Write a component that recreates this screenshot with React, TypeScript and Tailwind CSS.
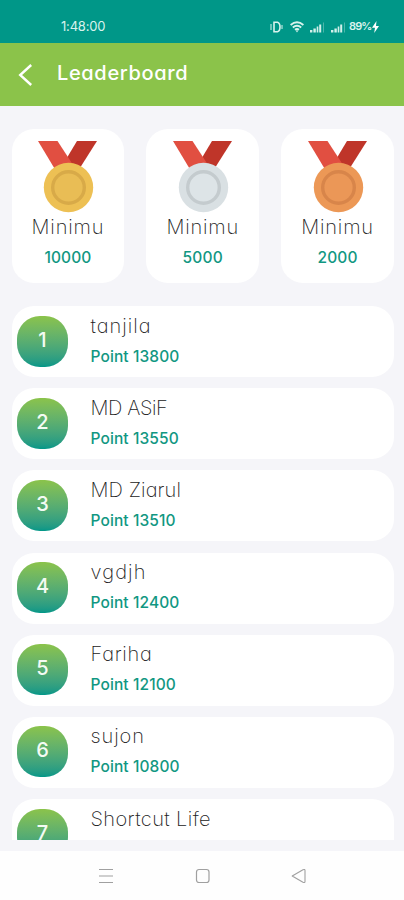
import React from 'react';

type MedalTone = { outer: string; ring: string; inner: string };

const medals: { tone: MedalTone; value: string; track: string }[] = [
  { tone: { outer: '#edc054', ring: '#d8aa48', inner: '#e9bd55' }, value: '10000', track: 'tracking-[0.1px]' },
  { tone: { outer: '#d9e0e3', ring: '#c4cbce', inner: '#dde4e7' }, value: '5000', track: 'tracking-[0.2px]' },
  { tone: { outer: '#ec9856', ring: '#d8854a', inner: '#eb9757' }, value: '2000', track: 'tracking-[0.2px]' },
];

const players = [
  { name: 'tanjila', points: '13800', track: 'tracking-[1px]' },
  { name: 'MD ASiF', points: '13550', track: 'tracking-[-0.4px]' },
  { name: 'MD Ziarul', points: '13510', track: 'tracking-[0.1px]' },
  { name: 'vgdjh', points: '12400', track: 'tracking-[1.1px]' },
  { name: 'Fariha', points: '12100', track: 'tracking-[0.7px]' },
  { name: 'sujon', points: '10800', track: 'tracking-[0.9px]' },
  { name: 'Shortcut Life', points: null, track: 'tracking-[0.4px]' },
];

function Medal({ tone }: { tone: MedalTone }) {
  return (
    <svg width="64" height="72" viewBox="0 0 64 72" className="block">
      <path d="M41 0H61L42 30H23Z" fill="#bf3529" />
      <path d="M2 0H21.5L41 30H20Z" fill="#e14f41" />
      <circle cx="32.5" cy="46.5" r="24.7" fill={tone.outer} />
      <circle cx="32.5" cy="46.5" r="15.8" fill={tone.inner} stroke={tone.ring} strokeWidth="3.4" />
    </svg>
  );
}

function Signal() {
  return (
    <svg width="15" height="12" viewBox="0 0 15 12" fill="#d3f0ea">
      <rect x="0" y="9" width="2.4" height="2.5" />
      <rect x="3.4" y="7.5" width="2.4" height="4" />
      <rect x="6.7" y="5.5" width="1.6" height="6" />
      <rect x="9.2" y="3.5" width="2" height="8" />
      <rect x="13" y="1.5" width="1" height="10" opacity="0.35" />
    </svg>
  );
}

function StatusBar() {
  return (
    <div className="flex h-[43px] shrink-0 items-start bg-[#009788] pt-[19px] pr-[25px] pl-[61px] text-[#d9f3ed]">
      <span className="text-[13px] leading-[15px] tracking-[-0.2px]">1:48:00</span>
      <div className="ml-auto flex h-[15px] items-center">
        <svg width="13" height="12" viewBox="0 0 13 12" fill="none" stroke="currentColor" className="mr-[7px]">
          <path d="M4 1.2H7.5Q10 2 10 6T7.5 10.8H4Z" strokeWidth="1.6" />
          <path d="M1 3V9M12 4V8" />
        </svg>
        <svg width="14" height="12" viewBox="0 0 14 12" fill="none" stroke="currentColor" strokeWidth="1.9" className="mr-[6px]">
          <path d="M.6 4Q7-1.3 13.4 4M2.8 6.5Q7 3 11.2 6.5M5 8.8Q7 7.2 9 8.8" />
          <path d="M5.7 9.4H8.3L7 11.4Z" fill="currentColor" stroke="none" />
        </svg>
        <Signal />
        <span className="w-[6px]" />
        <Signal />
        <span className="ml-[3px] w-[22px] text-[11px] leading-[13px] font-semibold tracking-[-0.9px] whitespace-nowrap">89%</span>
        <svg width="7" height="12" viewBox="0 0 7 12" fill="white" className="ml-[1px]">
          <path d="M4.5 0L0 6.8H3L2.2 12L7 5H4Z" />
        </svg>
      </div>
    </div>
  );
}

export default function App() {
  return (
    <div className="flex h-[900px] w-[404px] flex-col overflow-hidden bg-[#f5f5f9] font-['Inter','Liberation_Sans',sans-serif] [font-feature-settings:'cv11']">
      <StatusBar />
      <header className="flex h-[63px] shrink-0 items-center bg-[#8bc34a] pl-[18px] text-white">
        <svg width="15" height="22" viewBox="0 0 15 22" fill="none" stroke="currentColor" strokeWidth="2.4">
          <path d="M13.2 1L2.2 11L13.2 21" />
        </svg>
        <h1 className="mb-[4px] ml-[24px] text-[20px] leading-[28px] font-medium tracking-[0.65px]">Leaderboard</h1>
      </header>

      <main className="h-[734px] shrink-0 overflow-hidden pt-[23px] pr-[10px] pl-[11.5px]">
        <section className="grid grid-cols-3 gap-[22px]">
          {medals.map((medal) => (
            <div key={medal.value} className="flex h-[154px] flex-col items-center rounded-[22px] bg-white pt-[12px]">
              <Medal tone={medal.tone} />
              <div className="mt-px text-[20px] leading-[26px] font-extralight tracking-[0.8px] text-[#222]">Minimu</div>
              <div className={`mt-[7px] text-[15.5px] leading-[22px] font-medium text-[#119782] ${medal.track}`}>{medal.value}</div>
            </div>
          ))}
        </section>

        <section className="mt-[23px] flex flex-col gap-[11.2px]">
          {players.map((player, index) => (
            <div key={player.name} className="flex h-[71px] shrink-0 rounded-[22px] bg-white pt-[9.5px] pl-[5.5px]">
              <div className="flex h-[51px] w-[51px] justify-center rounded-[23px] bg-linear-to-b from-[#8bc34a] to-[#009788] pt-[10px] text-[20px] leading-[28px] font-medium text-[#f4fbf4]">
                {index + 1}
              </div>
              <div className="ml-[22.5px]">
                <div className={`-mt-[3px] text-[20px] leading-[26px] font-extralight text-[#222] ${player.track}`}>{player.name}</div>
                {player.points && (
                  <div className="mt-[7px] text-[15.5px] leading-[22px] font-medium tracking-[0.1px] text-[#119782]">Point {player.points}</div>
                )}
              </div>
            </div>
          ))}
        </section>
      </main>

      <div className="h-[11px] shrink-0" />
      <nav className="flex flex-1 items-start bg-[#fefefe] pt-[17px] pl-[99px] text-[#a0a0a0]">
        <svg width="14" height="16" viewBox="0 0 14 16" fill="none" stroke="currentColor">
          <path d="M0 1.5H14M0 14.5H14" />
          <path d="M0 8H14" strokeWidth="2" opacity="0.5" />
        </svg>
        <svg width="16" height="16" viewBox="0 0 16 16" fill="none" stroke="currentColor" strokeWidth="1.2" className="ml-[82px]">
          <rect x="1.5" y="1.5" width="12.5" height="13" rx="2.5" />
        </svg>
        <svg width="16" height="16" viewBox="0 0 16 16" fill="none" stroke="currentColor" strokeWidth="1.1" strokeLinejoin="round" className="ml-[80px]">
          <path d="M1.2 8L12 1.7Q14 1 14 2.5V13.5Q14 15 12 14.3Z" />
        </svg>
      </nav>
    </div>
  );
}
